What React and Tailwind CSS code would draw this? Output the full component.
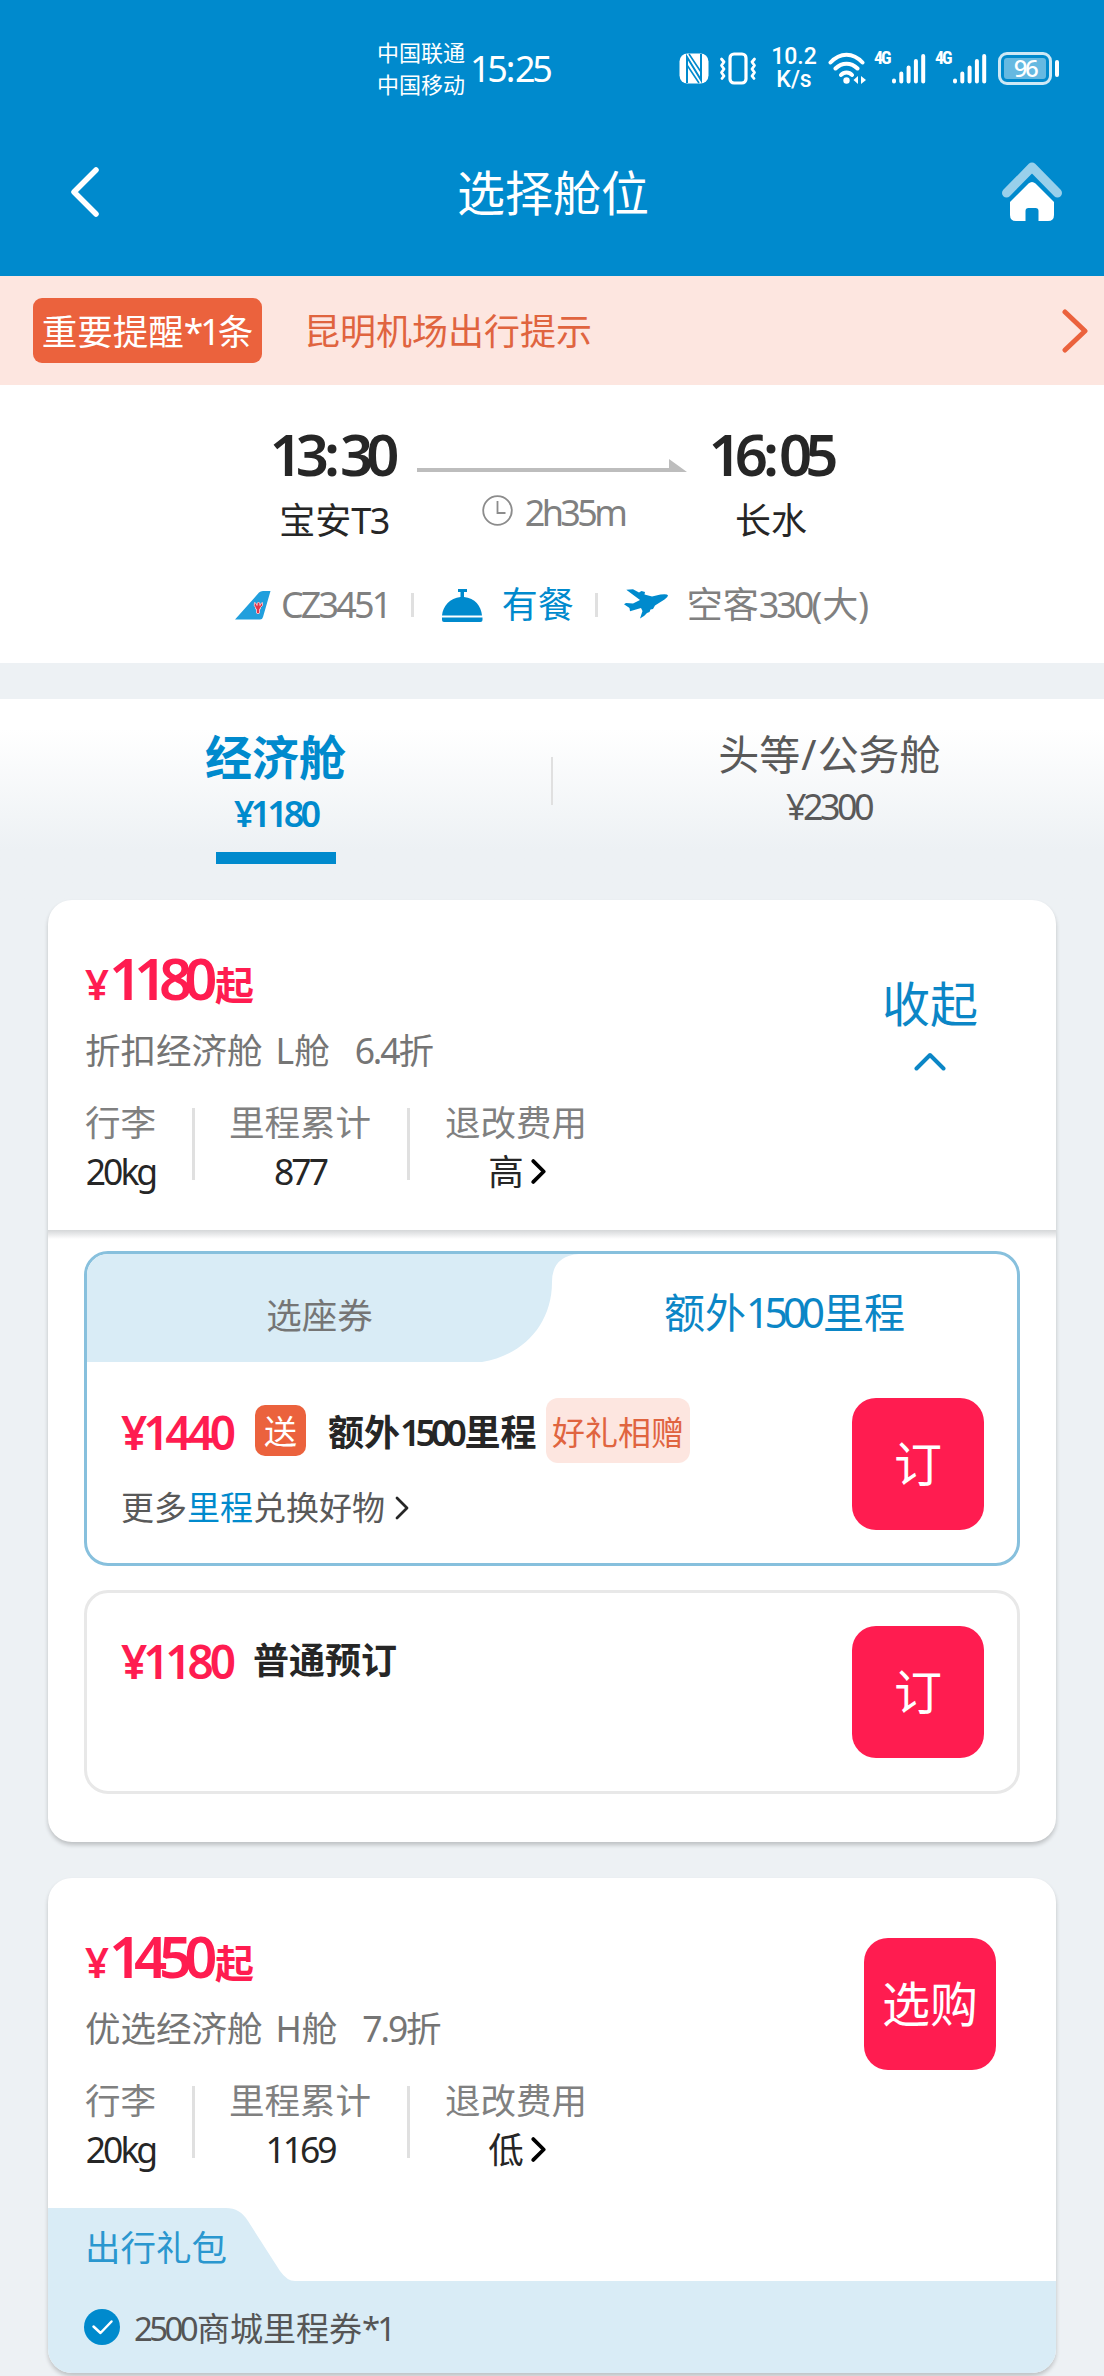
import React, { useState } from 'react';
import clsx from 'clsx';

// Latin letters and digits sit tighter than the Chinese text around them
const Num = ({ children, className = 'tracking-[-0.085em]' }) => (
  <span className={clsx('font-stretch-semi-condensed', className)}>{children}</span>
);

const Chevron = ({ className, d = 'M2 2l10 10L2 22', viewBox = '0 0 14 24', width = 4 }) => (
  <svg className={className} viewBox={viewBox} fill="none" stroke="currentColor" strokeWidth={width} strokeLinecap="round" strokeLinejoin="round">
    <path d={d} />
  </svg>
);

const SignalBars = () => (
  <svg className="w-[34px] h-[31px]" viewBox="0 0 34 31" stroke="white" strokeWidth="4" strokeLinecap="round">
    <path d="M2 27.500v1M9.300 20.500v8M16.600 14.500v14M23.900 8v20.500M31.200 3v25.500" />
  </svg>
);

const StatusBar = () => (
  <div className="h-[136px] pl-[377px] pr-[44px] flex items-center text-white">
    <div className="text-[22px] leading-[32px]">
      <p>中国联通</p>
      <p>中国移动</p>
    </div>
    <div className="ml-[5px] w-[82px] mt-px text-[36px] leading-[40px] whitespace-nowrap">
      <Num className="tracking-[-0.09em]">15</Num>
      <Num className="mx-px tracking-[-0.04em]">:</Num>
      <Num className="tracking-[-0.09em]">25</Num>
    </div>
    <svg className="ml-[127px] w-[30px] h-[31px] shrink-0" viewBox="0 0 30 31">
      <rect x="0.500" y="0.500" width="29" height="30" rx="8" fill="white" />
      <path d="M8 30V4l14 23V1" stroke="#008acd" strokeWidth="2" fill="none" />
      <path d="M10 1l12 18M8 12l12 18" stroke="#008acd" strokeWidth="1.600" fill="none" />
    </svg>
    <svg className="ml-[10px] w-[38px] h-[33px] shrink-0" viewBox="0 0 38 33" fill="none" stroke="white" strokeWidth="3.200" strokeLinecap="round" strokeLinejoin="round">
      <rect x="11" y="2" width="16" height="29" rx="4" />
      <path d="M2.500 7l2.500 3-2.500 3.500L5 17l-2.500 3.500L5 24l-2 2.500M35.500 7L33 10l2.500 3.500L33 17l2.500 3.500L33 24l2 2.500" strokeWidth="2.800" />
    </svg>
    <div className="ml-[13px] w-[48px] shrink-0 text-center font-[Roboto] text-[23px] leading-[23px] font-medium">
      <p>10.2</p>
      <p>K/s</p>
    </div>
    <svg className="ml-[10px] w-[39px] h-[33px] shrink-0" viewBox="0 0 39 33" fill="none" stroke="white" strokeWidth="4" strokeLinecap="round">
      <path d="M2.500 10.500C12 0 25 0 34.500 10.500M7.500 16.500c6.500-6.500 15.500-6.500 22 0M13 23c3-3.500 8-3.500 11 0" />
      <circle cx="18.500" cy="28.500" r="3.200" fill="white" stroke="none" />
      <path d="M30 24v8l-4.500-4zM33 32v-8l5 4z" fill="white" stroke="none" />
    </svg>
    <span className="ml-[7px] mb-[20px] w-[18px] shrink-0 font-[Roboto] text-[18px] leading-[16px] font-bold whitespace-nowrap"><Num className="tracking-[-0.12em]">4G</Num></span>
    <SignalBars />
    <span className="ml-[9px] mb-[20px] w-[18px] shrink-0 font-[Roboto] text-[18px] leading-[16px] font-bold whitespace-nowrap"><Num className="tracking-[-0.12em]">4G</Num></span>
    <SignalBars />
    <div className="ml-[11px] w-[54px] h-[33px] shrink-0 rounded-[9px] border-[3px] border-[#cde8f5] p-[3px]">
      <div className="h-full rounded-[3px] bg-[#66b9e1] flex items-center justify-center text-[24px] leading-none font-medium">
        <Num className="tracking-[-0.1em]">96</Num>
      </div>
    </div>
    <div className="ml-[3px] w-[4px] h-[17px] shrink-0 rounded-full bg-white" />
  </div>
);

const Header = () => (
  <div className="h-[276px] bg-[#008acd]">
    <StatusBar />
    <div className="h-[112px] pl-[70px] pr-[42px] flex items-center justify-between text-white">
      <Chevron className="w-[30px] h-[50px]" viewBox="0 0 30 50" d="M26 3L4 25l22 22" width={5.5} />
      <h1 className="ml-[4px] mt-[2px] text-[48px] leading-none">选择舱位</h1>
      <svg className="w-[60px] h-[60px]" viewBox="0 0 60 60">
        <path d="M4.500 31L30 5l25.500 26" fill="none" stroke="#99d0eb" strokeWidth="9" strokeLinecap="round" strokeLinejoin="round" />
        <path d="M26.500 21.500q3.500-3 7 0L52 40v13q0 6-6 6h-9.500V49q0-3-3-3h-7q-3 0-3 3v10H14q-6 0-6-6V40z" fill="white" />
      </svg>
    </div>
  </div>
);

const Notice = () => (
  <div className="h-[109px] bg-[#fde6e0] pl-[33px] pr-[16px] flex items-center text-[36px] leading-none text-[#e0643f]">
    <span className="w-[229px] h-[65px] pt-[3px] rounded-[9px] bg-[#eb623d] text-white text-[35.5px] flex items-center justify-center whitespace-nowrap">
      重要提醒<Num>*1</Num>条
    </span>
    <span className="ml-[42px] pt-[3px]">昆明机场出行提示</span>
    <Chevron className="ml-auto w-[26px] h-[44px] text-[#eb623d]" viewBox="0 0 26 44" d="M3 3l20 19L3 41" width={5} />
  </div>
);

const Divider = ({ className }) => <div className={clsx('w-[3px] shrink-0 bg-[#e0e0e0]', className)} />;

const BigTime = ({ hour, minute, className }) => (
  <p className={clsx('text-[58px] leading-[62px] font-semibold whitespace-nowrap', className)}>
    <Num className="tracking-[-0.12em]">{hour}</Num>
    <Num className="ml-[2px]">:</Num>
    <Num className="tracking-[-0.12em]">{minute}</Num>
  </p>
);

const FlightInfo = () => (
  <div className="h-[278px] bg-white flex flex-col items-center">
    <div className="mt-[38px] flex">
      <div className="w-[136px] flex flex-col items-center text-[#262626]">
        <BigTime hour="13" minute="30" className="mr-[6px]" />
        <p className="mt-[16px] text-[36px] leading-[40px]">宝安<Num className="tracking-[-0.04em]">T3</Num></p>
      </div>
      <div className="mx-[15px] w-[270px] flex flex-col items-center">
        <svg className="mt-[36px] w-[270px] h-[13px]" viewBox="0 0 270 13" fill="#bdbdbd">
          <path d="M0 9h252V0l18 13H0z" />
        </svg>
        <div className="mt-[23px] ml-[2px] flex items-center text-[36px] leading-[36px] text-[#808080]">
          <svg className="w-[31px] h-[31px] -mt-[5px]" viewBox="0 0 31 31" fill="none" stroke="#8c8c8c" strokeWidth="1.800">
            <circle cx="15.500" cy="15.500" r="14.300" />
            <path d="M15.500 6v12h8" />
          </svg>
          <span className="ml-[12px]"><Num className="tracking-[-0.1em]">2h35m</Num></span>
        </div>
      </div>
      <div className="w-[136px] flex flex-col items-center text-[#262626]">
        <BigTime hour="16" minute="05" />
        <p className="mt-[16px] ml-[2px] text-[36px] leading-[40px]">长水</p>
      </div>
    </div>
    <div className="mt-[40px] w-[634px] h-[48px] flex items-center text-[36px] leading-none text-[#808080] whitespace-nowrap">
      <svg className="w-[36px] h-[29px] shrink-0" viewBox="0 0 36 29">
        <path d="M0 28.500L24 1.500q1.500-1.500 4-1.500h7.500l-7.500 26q-.6 2.500-3 2.500z" fill="#219fdd" />
        <path d="M19.500 11.500q2 .5 2.500 3 0-3 1.500-3.500 1.500.5 1.500 3.500.500-2.500 2.500-3 1 3.500-2 5v1.500h-1v4q-1.500 1.500-3 0v-4h-1V16.500q-2-1.500-1-5z" fill="#e5354a" stroke="#f7c6cd" strokeWidth=".9" />
      </svg>
      <span className="ml-[10px] w-[131px]"><Num className="tracking-[-0.08em]">CZ3451</Num></span>
      <Divider className="h-[24px]" />
      <svg className="ml-[28px] w-[41px] h-[33px] shrink-0" viewBox="0 0 41 33" fill="#008acd">
        <path d="M16 0h9v3h-3v5C33 9 39 17 40 26.500H0C1 17 8 9 18.500 8V3H16zM0 28.500h40.500V31q0 2-2 2H2q-2 0-2-2z" />
      </svg>
      <span className="ml-[19px] w-[94px] text-[#008acd]">有餐</span>
      <Divider className="h-[24px]" />
      <svg className="ml-[26px] mb-[2px] w-[44px] h-[30px] shrink-0" viewBox="0 0 44 30" fill="#008acd">
        <path d="M2.300 .7L9 .2l6 3.300 2.500-1.500 3.500 1-.5 2.500L28 7.500l8.500-2q6.500-1 7.500.8 0 2.200-3.500 4.200l-9.500 6-2 3.500-2.500.5-1 2.500-2.500 1-3 3-4 2.500 2.500-7.500L17 19l-11 3.200-.5-3.200L0 15.300l2-1.300 7 .500 7-3.500z" />
      </svg>
      <span className="ml-[19px]">空客<Num>330</Num>(大)</span>
    </div>
  </div>
);

const CabinTabs = ({ cabin, onChange }) => (
  <div className="h-[201px] flex bg-linear-to-b from-white from-15% to-[#edf1f4] to-75%">
    <button onClick={() => onChange('economy')} className="w-[551px] flex flex-col items-center text-[#008acd] font-bold">
      <span className="mt-[32px] text-[47px] leading-[52px]">经济舱</span>
      <span className="mt-[9px] text-[36px] leading-[44px] font-semibold"><Num className="tracking-[-0.11em]">¥1180</Num></span>
      {cabin === 'economy' && <span className="mt-[16px] w-[120px] h-[12px] bg-[#008acd]" />}
    </button>
    <Divider className="mt-[58px] h-[48px] !w-[2px]" />
    <button onClick={() => onChange('first')} className="w-[551px] flex flex-col items-center text-[#595959]">
      <span className="mt-[31px] ml-[2px] text-[41px] leading-[48px]">头等<Num className="mx-px">/</Num>公务舱</span>
      <span className="mt-[7px] text-[36px] leading-[44px]"><Num className="tracking-[-0.1em]">¥2300</Num></span>
    </button>
  </div>
);

const FareStat = ({ label, children }) => (
  <div className="flex flex-col items-center whitespace-nowrap">
    <span className="text-[#808080]">{label}</span>
    <span className="mt-[9px] text-[#262626] flex items-center">{children}</span>
  </div>
);

const FareSummary = ({ price, cabin, code, discount, miles, fee, action, className }) => (
  <div className={clsx('flex justify-between pl-[37px]', className)}>
    <div>
      <p className="mt-[46px] flex items-baseline text-[39px] leading-[64px] font-bold text-[#ff1c50]">
        <span className="w-[24px] text-[42px] font-semibold">¥</span>
        <Num className="w-[106px] text-[58px] font-semibold tracking-[-0.14em]">{price}</Num>
        起
      </p>
      <p className="mt-[13px] text-[35.5px] leading-[40px] text-[#757575]">
        {cabin}
        <span className="ml-[13px]">{code}</span>舱
        <span className="ml-[25px]"><Num className="tracking-[-0.06em]">{discount}</Num></span>折
      </p>
      <div className="mt-[32px] flex text-[35.5px] leading-[40px]">
        <FareStat label="行李"><Num>20kg</Num></FareStat>
        <Divider className="mt-[6px] ml-[36px] mr-[34px] h-[72px]" />
        <FareStat label="里程累计"><Num>{miles}</Num></FareStat>
        <Divider className="mt-[6px] ml-[36px] mr-[35px] h-[72px]" />
        <FareStat label="退改费用">
          <span className="ml-[2px]">{fee}</span>
          <Chevron className="ml-[7px] w-[15px] h-[25px] text-black" width={3.6} />
        </FareStat>
      </div>
    </div>
    {action}
  </div>
);

const BookButton = ({ children, className }) => (
  <button className={clsx('w-[132px] h-[132px] shrink-0 rounded-[24px] bg-[#ff1c50] text-white text-[48px] leading-none', className)}>
    {children}
  </button>
);

const Price = ({ children }) => (
  <span className="text-[46px] font-semibold text-[#ff1c50]"><Num className="tracking-[-0.09em]">{children}</Num></span>
);

const MilesOption = () => (
  <div className="h-[315px] rounded-[24px] border-[3px] border-[#87c0dd] overflow-hidden">
    <div className="relative h-[108px] flex leading-none">
      <svg className="absolute left-0 top-0 w-[492px] h-[108px]" viewBox="0 0 492 108" fill="#d9ecf6">
        <path d="M0 0h492Q465 2 465 28C465 72 434 102 395 108H0z" />
      </svg>
      <span className="relative w-[465px] text-center text-[35.5px] leading-[122px] text-[#757575]">选座券</span>
      <span className="relative w-[465px] text-center text-[41px] leading-[117px] text-[#0b86c6]">
        额外<Num className="tracking-[-0.12em] pr-[3px]">1500</Num>里程
      </span>
    </div>
    <div className="flex justify-between pl-[34px] pr-[33px] pt-[36px]">
      <div>
        <div className="h-[65px] flex items-center leading-none whitespace-nowrap">
          <div className="w-[134px] pt-[2px]"><Price>¥1440</Price></div>
          <span className="w-[51px] h-[51px] mb-px pt-[2px] rounded-[10px] bg-[#eb623d] text-white text-[33px] flex items-center justify-center">送</span>
          <span className="ml-[22px] w-[207px] pt-[4px] text-[36px] font-bold text-[#262626]">额外<Num className="font-semibold tracking-[-0.145em] pr-[3px]">1500</Num>里程</span>
          <span className="ml-[11px] w-[144px] h-[65px] pt-[4px] rounded-[12px] bg-[#fde6e0] text-[#e0643f] text-[33px] flex items-center justify-center">好礼相赠</span>
        </div>
        <p className="mt-[25px] flex items-center text-[33px] leading-[40px] text-[#595959]">
          更多<span className="text-[#008acd]">里程</span>兑换好物
          <Chevron className="ml-[10px] w-[14px] h-[24px] text-[#262626]" width={2.8} />
        </p>
      </div>
      <BookButton>订</BookButton>
    </div>
  </div>
);

const StandardOption = () => (
  <div className="mt-[24px] h-[204px] rounded-[24px] border-[3px] border-[#e8e8e8] pl-[34px] pr-[33px] pt-[33px] flex justify-between">
    <div className="h-[69px] flex items-center leading-none">
      <div className="w-[132px]"><Price>¥1180</Price></div>
      <span className="text-[36px] font-bold text-[#262626]">普通预订</span>
    </div>
    <BookButton>订</BookButton>
  </div>
);

const GiftPack = () => (
  <div>
    <div className="relative h-[73px]">
      <svg className="absolute left-0 top-0 w-[247px] h-[73px]" viewBox="0 0 247 73" fill="#d9ecf6">
        <path d="M0 0h178Q192 0 200 13l32 50Q239 73 247 73H0z" />
      </svg>
      <p className="relative pl-[37px] text-[35.5px] leading-[78px] text-[#2a97cf]">出行礼包</p>
    </div>
    <div className="h-[92px] pl-[36px] bg-[#d9ecf6] flex items-center text-[33px] leading-none text-[#555555]">
      <svg className="w-[36px] h-[36px]" viewBox="0 0 36 36" fill="none">
        <circle cx="18" cy="18" r="18" fill="#008acd" />
        <path d="M9.500 17.500l7 6.500L27.500 12.500" stroke="white" strokeWidth="2.500" strokeLinecap="round" strokeLinejoin="round" />
      </svg>
      <span className="ml-[14px] pt-[2px]"><Num className="tracking-[-0.11em] pr-[2px]">2500</Num>商城里程券<Num>*1</Num></span>
    </div>
  </div>
);

const App = () => {
  const [cabin, setCabin] = useState('economy');
  const [expanded, setExpanded] = useState(true);

  return (
    <div className="w-[1104px] h-[2376px] overflow-hidden bg-[#edf1f4] font-['Noto_Sans','Noto_Sans_CJK_SC',sans-serif]">
      <Header />
      <Notice />
      <FlightInfo />
      <div className="h-[36px]" />
      <CabinTabs cabin={cabin} onChange={setCabin} />

      <div className="mx-[48px] bg-white rounded-[24px] shadow-[0_3px_4px_rgba(0,0,0,0.2)]">
        <FareSummary
          className="h-[330px]"
          price="1180"
          cabin="折扣经济舱"
          code="L"
          discount="6.4"
          miles="877"
          fee="高"
          action={
            <button onClick={() => setExpanded(!expanded)} className="w-[132px] h-[110px] mt-[78px] mr-[60px] flex flex-col items-center text-[#0b86c6]">
              <span className="text-[48px] leading-[52px]">收起</span>
              <Chevron className="mt-[22px] w-[32px] h-[19px]" viewBox="0 0 32 19" d="M2.500 16.500L16 3l13.500 13.500" width={4} />
            </button>
          }
        />
        {expanded && (
          <>
            <div className="h-[9px] bg-linear-to-b from-[#d5d7d9] to-white" />
            <div className="pt-[12px] px-[36px] pb-[48px]">
              <MilesOption />
              <StandardOption />
            </div>
          </>
        )}
      </div>

      <div className="mt-[36px] mx-[48px] bg-white rounded-[24px] overflow-hidden shadow-[0_3px_4px_rgba(0,0,0,0.2)]">
        <FareSummary
          className="h-[330px]"
          price="1450"
          cabin="优选经济舱"
          code="H"
          discount="7.9"
          miles="1169"
          fee="低"
          action={<BookButton className="mt-[60px] mr-[60px]">选购</BookButton>}
        />
        <GiftPack />
      </div>
    </div>
  );
};

export default App;
